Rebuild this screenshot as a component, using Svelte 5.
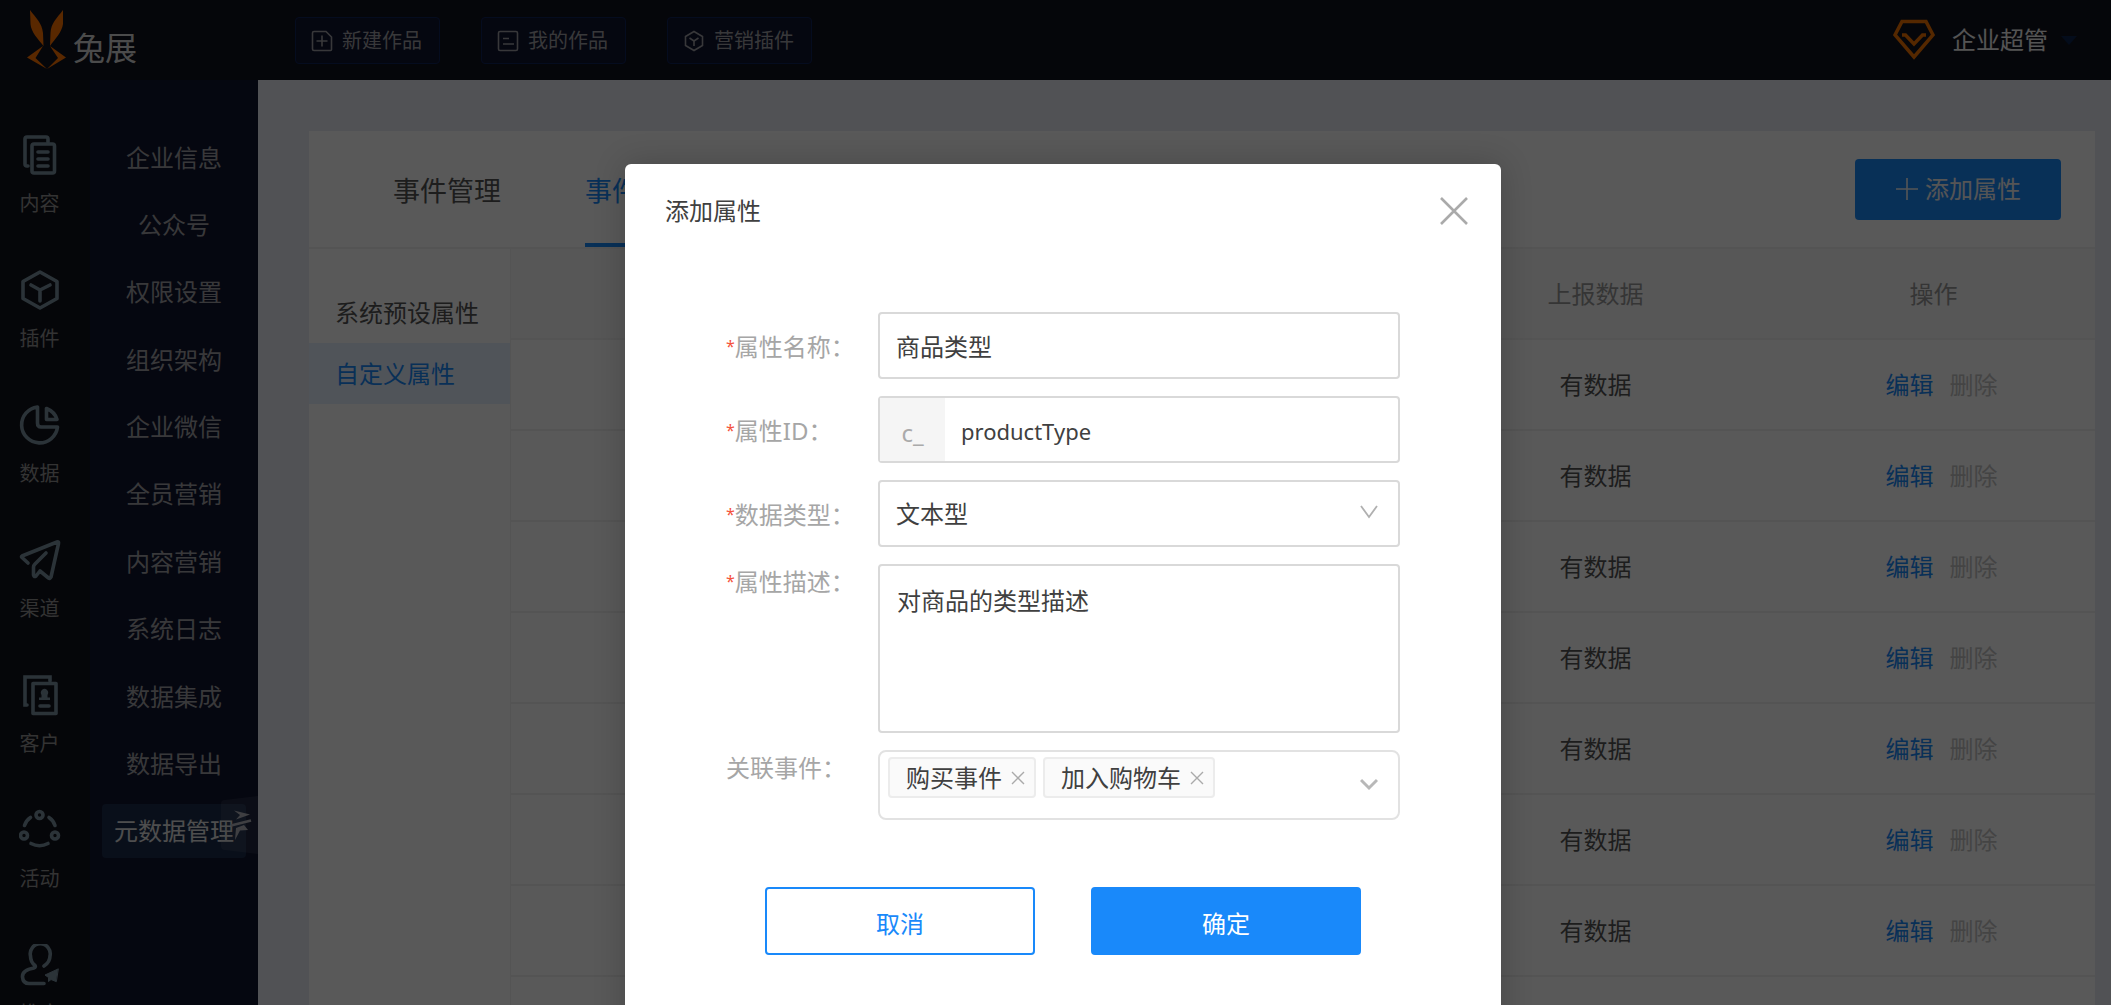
<script>
  let topLinks = [
    { name: '新建作品', icon: 'new' },
    { name: '我的作品', icon: 'works' },
    { name: '营销插件', icon: 'plugin' }
  ];

  let railItems = [
    { name: '内容', icon: 'content' },
    { name: '插件', icon: 'plugin' },
    { name: '数据', icon: 'data' },
    { name: '渠道', icon: 'channel' },
    { name: '客户', icon: 'customer' },
    { name: '活动', icon: 'activity' },
    { name: '推广', icon: 'promote' }
  ];

  let menuItems = [
    '企业信息',
    '公众号',
    '权限设置',
    '组织架构',
    '企业微信',
    '全员营销',
    '内容营销',
    '系统日志',
    '数据集成',
    '数据导出',
    '元数据管理'
  ];
  let activeMenu = '元数据管理';

  let tabs = ['事件管理', '事件属性'];
  let activeTab = '事件属性';

  let groups = ['系统预设属性', '自定义属性'];
  let activeGroup = '自定义属性';

  let rows = Array.from({ length: 8 }, (_, i) => ({ id: i, status: '有数据' }));

  let showDialog = true;
  let form = {
    name: '商品类型',
    id: 'productType',
    type: '文本型',
    desc: '对商品的类型描述',
    events: ['购买事件', '加入购物车']
  };

  const removeEvent = (name) => {
    form.events = form.events.filter((e) => e !== name);
  };

  const close = () => {
    showDialog = false;
  };
</script>

<div class="page">
  <header>
    <a class="logo" href="#home">
      <svg width="40" height="60" viewBox="0 0 40 60" fill="#ff7200">
        <path d="M3 0C9 8 15 13 16 23L16.500 36C11 29 4 22 3.500 14Z" />
        <path d="M36 0C30 8 24 13 23.500 23L23 36C28 29 35 22 36 14Z" />
        <path d="M16 36L0 47.500L20 59L8.500 48Z" />
        <path d="M23 36L39 47.500L20 59L31 48Z" />
      </svg>
      <span>兔展</span>
    </a>
    <nav class="top-links">
      {#each topLinks as link}
        <button>
          <svg width="22" height="22" viewBox="0 0 22 22" fill="none" stroke="currentColor" stroke-width="1.600">
            {#if link.icon === 'new'}
              <path d="M3 1.500H15L20.500 7V19.500Q20.500 20.500 19.500 20.500H3Q1.500 20.500 1.500 19V3Q1.500 1.500 3 1.500ZM11 5.500V16.500M5.500 11H16.500" />
            {:else if link.icon === 'works'}
              <path d="M3 1.500H19Q20.500 1.500 20.500 3V19Q20.500 20.500 19 20.500H3Q1.500 20.500 1.500 19V3Q1.500 1.500 3 1.500ZM6 8.500H12M6 14H17" />
            {:else}
              <path d="M11 1.500L19.500 6.500V15.500L11 20.500L2.500 15.500V6.500ZM6.500 8L11 11L15.500 8M11 11V16" />
            {/if}
          </svg>
          {link.name}
        </button>
      {/each}
    </nav>
    <button class="user">
      <svg width="42" height="42" viewBox="0 0 42 42" fill="none" stroke="#f47200" stroke-width="3.500">
        <path d="M9 2.500H33L40 16L21 38L2 16Z" />
        <path d="M9 16H12.500L21 25L29.500 16H33" />
      </svg>
      <span>企业超管</span>
      <i class="caret"></i>
    </button>
  </header>

  <div class="body">
    <nav class="rail">
      {#each railItems as item}
        <a href="#{item.icon}">
          <svg width="42" height="42" viewBox="0 0 42 42" fill="none" stroke="currentColor" stroke-width="3.600" stroke-linejoin="round" stroke-linecap="round">
            {#if item.icon === 'content'}
              <path d="M29 8V5Q29 3 27 3H8Q6 3 6 5V30Q6 32 8 32H9" />
              <rect x="13" y="10" width="22.500" height="29" rx="2" />
              <path d="M19 18H29M19 25H29M19 32H29" />
            {:else if item.icon === 'plugin'}
              <path d="M21 3L38 12.500V29.500L21 39L4 29.500V12.500Z" />
              <path d="M12 16L21 21L31 16M21 21V32" />
            {:else if item.icon === 'data'}
              <path d="M18.500 3V19Q18.500 23 22 23H38.500A18 18 0 1 1 18.500 3Z" />
              <path d="M27.500 4.500V15.500H38Q36 8 27.500 4.500Z" />
            {:else if item.icon === 'channel'}
              <path d="M9 24L3 18.500Q2 17.500 3 17L38 3Q40 2.500 39.500 4.500L32 38Q31 40 29.500 39L21 32L17 37Q15 38.500 14.500 36V28Q14.500 26.500 16 25L27 14" />
            {:else if item.icon === 'customer'}
              <path d="M31 7V3H6V31H8" stroke-linejoin="miter" />
              <rect x="14" y="9.500" width="23" height="30" />
              <path d="M21 32H30" />
              <path d="M20 26V23.500H22.500V21A3.600 4 0 1 1 28.500 21V23.500H31V26Z" fill="currentColor" stroke="none" />
            {:else if item.icon === 'activity'}
              <circle cx="20.500" cy="6" r="3.500" />
              <circle cx="5" cy="26.500" r="3.500" />
              <circle cx="36" cy="26.500" r="3.500" />
              <path d="M5.500 16.500Q7 11.500 11.500 8.500M30 8.500Q34.500 11.500 36 16.500M12 34.500Q20.500 39 29 34.500" />
            {:else}
              <path d="M25 22Q31 18 31 12A10 10 0 1 0 11.500 12Q11.500 18 16 21.500Q17 23 15 24Q3 26 3.500 33Q4 39.500 10 39.500H25" />
              <path d="M39 25L26 31L29.500 33.500V37.500L32 35.500L37 37.500Z" fill="currentColor" stroke-width="1" />
            {/if}
          </svg>
          <span>{item.name}</span>
        </a>
      {/each}
    </nav>

    <nav class="menu">
      <ul>
        {#each menuItems as item}
          <li><a href="#menu" class:active={item === activeMenu}>{item}</a></li>
        {/each}
      </ul>
      <button class="fold" aria-label="收起菜单">
        <svg width="37" height="58" viewBox="0 0 37 58">
          <path d="M4 4L37 0V58L4 54Q0 54 0 50V8Q0 4 4 4Z" fill="#8c96aa" fill-opacity="0.140" />
          <path d="M13 14.500L29 18.500L15 23.500L19 19Z" fill="#b4b6be" />
          <path d="M10 29.500L30 24.500" stroke="#b4b6be" stroke-width="2.600" />
          <path d="M14 44L15 32L23 29L27 34L19 34.500Z" fill="#b4b6be" />
        </svg>
      </button>
    </nav>

    <main>
      <section class="card">
        <div class="card-head">
          <div class="tabs">
            {#each tabs as tab}
              <button class:active={tab === activeTab}>{tab}</button>
            {/each}
          </div>
          <button class="add">
            <svg width="24" height="24" viewBox="0 0 24 24" fill="none" stroke="currentColor" stroke-width="1.600">
              <path d="M12 1V23M1 12H23" />
            </svg>
            添加属性
          </button>
        </div>
        <div class="card-body">
          <div class="groups">
            {#each groups as group}
              <button class:active={group === activeGroup}>{group}</button>
            {/each}
          </div>
          <table>
            <colgroup>
              <col />
              <col class="col-status" />
              <col class="col-action" />
            </colgroup>
            <thead>
              <tr>
                <th></th>
                <th>上报数据</th>
                <th>操作</th>
              </tr>
            </thead>
            <tbody>
              {#each rows as row (row.id)}
                <tr>
                  <td></td>
                  <td>{row.status}</td>
                  <td>
                    <div class="actions">
                      <a href="#edit">编辑</a>
                      <button disabled>删除</button>
                    </div>
                  </td>
                </tr>
              {/each}
            </tbody>
          </table>
        </div>
      </section>
    </main>
  </div>

  {#if showDialog}
    <div class="mask">
      <div class="dialog" role="dialog" aria-modal="true" aria-labelledby="dialog-title">
        <div class="dialog-head">
          <h2 id="dialog-title">添加属性</h2>
          <button class="close" aria-label="关闭" on:click={close}>
            <svg width="28" height="28" viewBox="0 0 28 28" fill="none" stroke="currentColor" stroke-width="2.600">
              <path d="M1 1L27 27M27 1L1 27" />
            </svg>
          </button>
        </div>

        <form on:submit|preventDefault={close}>
          <label for="attr-name"><em>*</em>属性名称：</label>
          <input id="attr-name" class="box" type="text" bind:value={form.name} />

          <label for="attr-id"><em>*</em>属性ID：</label>
          <div class="box prefixed">
            <span>c_</span>
            <input id="attr-id" type="text" bind:value={form.id} />
          </div>

          <label for="attr-type"><em>*</em>数据类型：</label>
          <div class="select-wrap">
            <select id="attr-type" class="box" bind:value={form.type}>
              <option>文本型</option>
            </select>
            <svg width="18" height="14" viewBox="0 0 18 14" fill="none" stroke="currentColor" stroke-width="1.800">
              <path d="M1 1L9 12L17 1" />
            </svg>
          </div>

          <label class="top" for="attr-desc"><em>*</em>属性描述：</label>
          <textarea id="attr-desc" class="box" bind:value={form.desc}></textarea>

          <label class="top" for="attr-events">关联事件：</label>
          <div class="events">
            {#each form.events as event}
              <span class="tag">
                {event}
                <button type="button" aria-label="移除{event}" on:click={() => removeEvent(event)}>
                  <svg width="14" height="14" viewBox="0 0 14 14" fill="none" stroke="currentColor" stroke-width="1.400">
                    <path d="M1 1L13 13M13 1L1 13" />
                  </svg>
                </button>
              </span>
            {/each}
            <button id="attr-events" class="open" type="button" aria-label="选择事件">
              <svg width="18" height="14" viewBox="0 0 18 14" fill="none" stroke="currentColor" stroke-width="3">
                <path d="M1 2L9 10L17 2" />
              </svg>
            </button>
          </div>

          <div class="buttons">
            <button type="button" class="cancel" on:click={close}>取消</button>
            <button type="submit" class="ok">确定</button>
          </div>
        </form>
      </div>
    </div>
  {/if}
</div>

<style>
  :global(body) {
    margin: 0;
    font-family: 'Noto Sans', 'Noto Sans CJK SC', sans-serif;
    font-size: 24px;
    line-height: 30px;
  }

  * {
    box-sizing: border-box;
  }

  button,
  input,
  select,
  textarea {
    font: inherit;
    color: inherit;
    margin: 0;
    padding: 0;
    border: 0;
    background: none;
    outline: none;
  }

  button {
    cursor: pointer;
  }

  a {
    color: inherit;
    text-decoration: none;
  }

  svg {
    display: block;
    flex: none;
  }

  .page {
    position: relative;
    display: flex;
    flex-direction: column;
    height: 100vh;
    overflow: hidden;
    background: #e9ebf2;
    color: #555;
  }

  /* Header */
  header {
    display: flex;
    align-items: center;
    flex: none;
    height: 80px;
    padding: 0 34px 0 27px;
    background: #10121d;
  }

  .logo {
    display: flex;
    align-items: center;
    gap: 6px;
    width: 268px;
    color: #d8d8d8;
    font-size: 32px;
    line-height: 40px;
  }

  .logo span {
    padding-top: 16px;
  }

  .top-links {
    display: flex;
    gap: 41px;
  }

  .top-links button {
    display: flex;
    align-items: center;
    gap: 9px;
    height: 47px;
    padding: 2px 17px 0 15px;
    border: 1px solid #10235a;
    border-radius: 4px;
    background: #0f1430;
    color: #a2a2a6;
    font-size: 20px;
  }

  .user {
    display: flex;
    align-items: center;
    margin-left: auto;
    color: #f0f0f0;
  }

  .user span {
    padding: 0 13px 0 17px;
  }

  .caret {
    border: 8px solid transparent;
    border-top: 9px solid #0c234e;
    border-bottom: 0;
  }

  .body {
    display: flex;
    flex: 1;
    min-height: 0;
  }

  /* First level menu */
  .rail {
    display: flex;
    flex-direction: column;
    gap: 50px;
    flex: none;
    width: 90px;
    padding: 54px 11px 0 0;
    background: #10121a;
    color: #939393;
    font-size: 20px;
  }

  .rail a {
    display: flex;
    flex-direction: column;
    align-items: center;
    gap: 13px;
  }

  .rail svg {
    color: #7c92a2;
  }

  /* Second level menu */
  .menu {
    position: relative;
    flex: none;
    width: 168px;
    padding-top: 44px;
    background: #10152f;
    color: #a2a2a6;
  }

  .menu ul {
    display: grid;
    grid-auto-rows: 1fr;
    align-items: center;
    height: 741px;
    margin: 0;
    padding: 0 12px;
    list-style: none;
  }

  .menu a {
    display: block;
    border-radius: 4px;
    line-height: 54px;
    text-align: center;
    white-space: nowrap;
  }

  .menu a.active {
    background: #1b2c4a;
    color: #e0e0e0;
  }

  .fold {
    position: absolute;
    right: 0;
    top: 716px;
  }

  /* Content */
  main {
    flex: 1;
    min-width: 0;
    padding: 51px 16px 0 51px;
  }

  .card {
    min-height: 100%;
    background: #fff;
  }

  .card-head {
    display: flex;
    align-items: center;
    justify-content: space-between;
    height: 118px;
    padding: 0 34px 0 84px;
    border-bottom: 2px solid #efefef;
  }

  .tabs {
    display: flex;
    gap: 84px;
    height: 116px;
    font-size: 27px;
  }

  .tabs button {
    padding-top: 8px;
    border-bottom: 4px solid transparent;
  }

  .tabs .active {
    border-color: #1989fa;
    color: #1989fa;
  }

  .add {
    display: flex;
    align-items: center;
    justify-content: center;
    gap: 6px;
    width: 206px;
    height: 61px;
    border-radius: 4px;
    background: #1989fa;
    color: #f4f4f4;
  }

  .card-body {
    display: flex;
    align-items: flex-start;
  }

  .groups {
    flex: none;
    width: 202px;
    height: 900px;
    padding-top: 33px;
    border-right: 1px solid #efefef;
  }

  .groups button {
    display: block;
    width: 100%;
    height: 61px;
    padding-left: 26px;
    text-align: left;
    white-space: nowrap;
  }

  .groups .active {
    background: #e6f0ff;
    color: #1989fa;
  }

  table {
    flex: 1;
    border-collapse: collapse;
    table-layout: fixed;
  }

  .col-status {
    width: 353px;
  }

  .col-action {
    width: 323px;
  }

  th,
  td {
    height: 91px;
    padding: 0;
    border-bottom: 2px solid #efefef;
    text-align: center;
  }

  th {
    height: 90px;
    background: #fafafa;
    color: #999;
    font-weight: 400;
  }

  .actions {
    display: flex;
    justify-content: center;
    gap: 16px;
    padding-left: 16px;
  }

  .actions a {
    color: #1989fa;
  }

  .actions button {
    color: #c4c4c4;
  }

  /* Dialog */
  .mask {
    position: absolute;
    inset: 0;
    display: flex;
    justify-content: center;
    padding: 164px 0 0 15px;
    background: rgba(0, 0, 0, 0.65);
  }

  .dialog {
    width: 876px;
    height: 900px;
    padding: 32px 33px 0 40px;
    border-radius: 6px;
    background: #fff;
    box-shadow: 0 0 32px rgba(0, 0, 0, 0.2);
    color: #404040;
  }

  .dialog-head {
    display: flex;
    align-items: center;
    justify-content: space-between;
    margin-bottom: 86px;
  }

  h2 {
    margin: 0;
    font-size: 24px;
    font-weight: 400;
  }

  .close {
    color: #aaa;
  }

  form {
    display: grid;
    grid-template-columns: 152px 522px;
    row-gap: 17px;
    align-items: center;
    padding-left: 61px;
  }

  label {
    padding-top: 3px;
    color: #a6a6a6;
    white-space: nowrap;
  }

  label.top {
    align-self: start;
  }

  em {
    color: #f5523c;
    font-size: 16px;
    font-style: normal;
    vertical-align: 4px;
    line-height: 1;
  }

  .box {
    width: 100%;
    height: 67px;
    padding: 0 16px;
    border: 2px solid #d9d9d9;
    border-radius: 4px;
  }

  .prefixed {
    display: flex;
    padding: 0;
  }

  .prefixed span {
    width: 65px;
    padding-top: 6px;
    background: #f5f5f5;
    color: #aaa;
    line-height: 57px;
    text-align: center;
  }

  .prefixed input {
    flex: 1;
    padding: 2px 16px 0;
    font-size: 22px;
  }

  .select-wrap {
    display: grid;
    align-items: center;
    color: #b0b0b0;
  }

  .select-wrap > * {
    grid-area: 1 / 1;
  }

  .select-wrap svg {
    justify-self: end;
    margin: 0 22px 4px 0;
    pointer-events: none;
  }

  select {
    appearance: none;
    color: #404040;
  }

  textarea.box {
    display: block;
    height: 169px;
    padding: 20px 17px;
    resize: none;
  }

  .events {
    display: flex;
    align-items: flex-start;
    gap: 7px;
    height: 70px;
    padding: 5px 20px 0 8px;
    border: 2px solid #e2e2e2;
    border-radius: 8px;
  }

  .tag {
    display: flex;
    align-items: center;
    gap: 9px;
    height: 41px;
    padding: 0 9px 0 16px;
    border: 2px solid #ececec;
    border-radius: 4px;
    background: #fafafa;
  }

  .tag button {
    color: #aaa;
  }

  .open {
    margin: 21px 0 0 auto;
    color: #b8b8b8;
  }

  .buttons {
    grid-column: 1 / -1;
    display: flex;
    gap: 56px;
    padding: 50px 0 0 39px;
  }

  .buttons button {
    width: 270px;
    height: 68px;
    padding-top: 5px;
    border: 2px solid #1989fa;
    border-radius: 4px;
  }

  .cancel {
    color: #1989fa;
  }

  .ok {
    background: #1989fa;
    color: #fff;
  }
</style>
